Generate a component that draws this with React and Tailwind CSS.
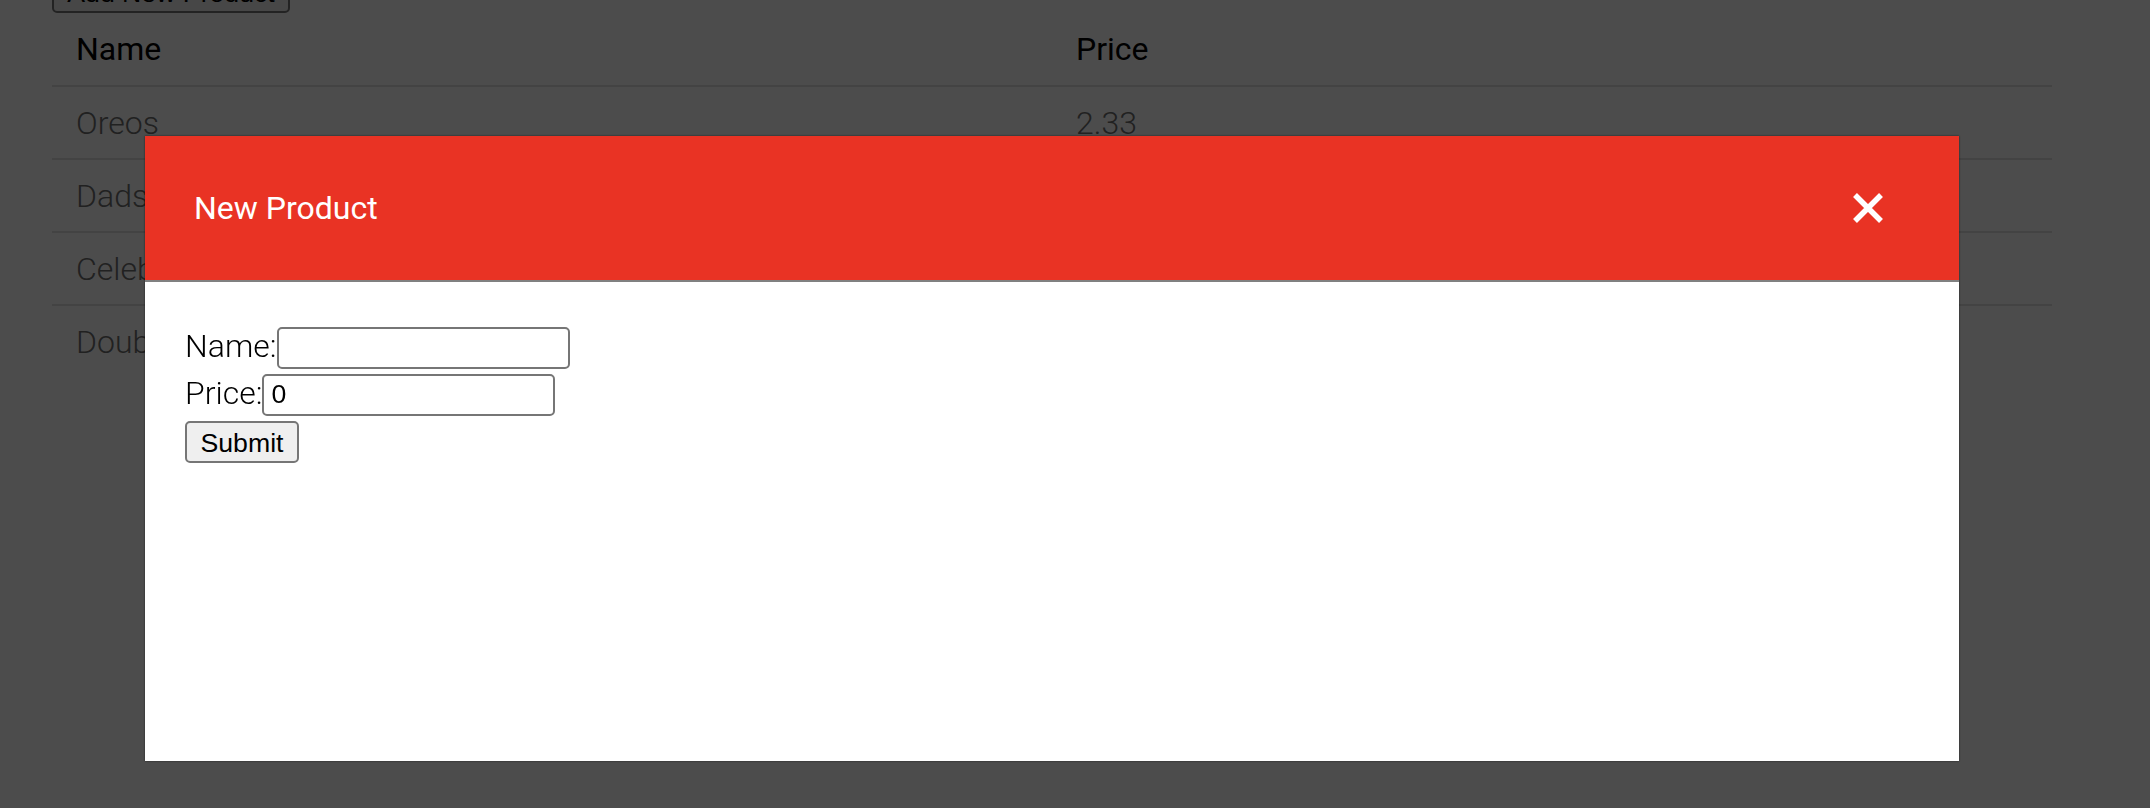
import React from 'react';

const products = [
  { name: 'Oreos', price: '2.33' },
  { name: 'Dads Cookies', price: '1.99' },
  { name: 'Celebrations', price: '5.50' },
  { name: 'Double Decker', price: '0.89' },
];

function CloseIcon() {
  return (
    <svg width="30" height="30" viewBox="0 0 30 30">
      <path d="M2 2 L28 28 M28 2 L2 28" stroke="#fff" strokeWidth="5.5" />
    </svg>
  );
}

function ProductTable() {
  return (
    <table className="w-[2000px] border-collapse font-['Roboto',sans-serif] text-[32px]">
      <thead>
        <tr className="h-[73px] border-b-2 border-[#e0e0e0]">
          <th className="w-1/2 px-6 text-left font-normal text-black">Name</th>
          <th className="w-1/2 px-6 text-left font-normal text-black">Price</th>
        </tr>
      </thead>
      <tbody>
        {products.map((p, i) => (
          <tr
            key={p.name}
            className={i < products.length - 1 ? 'h-[73px] border-b-2 border-[#e0e0e0]' : 'h-[73px]'}
          >
            <td className="px-6 font-['Roboto_Light','Roboto',sans-serif] font-light text-[#6e6e6e]">{p.name}</td>
            <td className="px-6 font-['Roboto_Light','Roboto',sans-serif] font-light text-[#6e6e6e]">{p.price}</td>
          </tr>
        ))}
      </tbody>
    </table>
  );
}

function NewProductModal() {
  return (
    <div className="fixed inset-0 bg-black/70">
      <div className="ml-[145px] mt-[136px] flex h-[625px] w-[1814px] flex-col bg-white shadow-[0_0_2px_rgba(0,0,0,0.6)]">
        <div className="flex h-[146px] shrink-0 items-center justify-between border-b-2 border-[#808080] bg-[#e93324] pl-[49px] pr-[76px]">
          <h2 className="font-['Roboto',sans-serif] text-[32px] font-normal text-white">New Product</h2>
          <button className="flex items-center justify-center">
            <CloseIcon />
          </button>
        </div>
        <form className="flex flex-col pl-[40px] pt-[42px] font-['Roboto_Light','Roboto',sans-serif] text-[32px] font-light text-black">
          <div className="flex h-[47px] items-center">
            <label htmlFor="name" className="mb-[4px]">Name:</label>
            <input
              id="name"
              type="text"
              className="h-[42px] w-[293px] rounded-[5px] border-2 border-[#767676] px-[7px] font-['Liberation_Sans',Arial,sans-serif] text-[26.67px] font-normal"
            />
          </div>
          <div className="flex h-[47px] items-center">
            <label htmlFor="price" className="mb-[4px]">Price:</label>
            <input
              id="price"
              type="text"
              defaultValue="0"
              className="h-[42px] w-[293px] rounded-[5px] border-2 border-[#767676] px-[7px] font-['Liberation_Sans',Arial,sans-serif] text-[26.67px] font-normal"
            />
          </div>
          <div className="flex h-[47px] items-center">
            <button
              type="button"
              className="h-[42px] w-[114px] rounded-[5px] border-2 border-[#767676] bg-[#efefef] font-['Liberation_Sans',Arial,sans-serif] text-[26.67px] font-normal text-black"
            >
              Submit
            </button>
          </div>
        </form>
      </div>
    </div>
  );
}

export default function App() {
  return (
    <div className="h-screen overflow-hidden bg-white">
      <div className="-mt-[29px] pl-[52px]">
        <button className="h-[42px] w-[238px] rounded-[5px] border-2 border-[#767676] bg-[#efefef] font-['Liberation_Sans',Arial,sans-serif] text-[26.67px] text-black">
          Add New Product
        </button>
        <ProductTable />
      </div>
      <NewProductModal />
    </div>
  );
}
